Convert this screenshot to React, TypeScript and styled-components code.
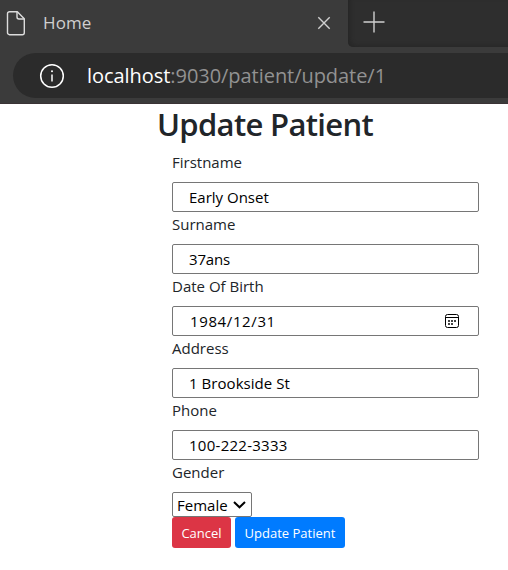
import React from "react";
import styled, { createGlobalStyle } from "styled-components";

const GlobalStyle = createGlobalStyle`
  * { box-sizing: border-box; }
  body {
    margin: 0;
    background: #fff;
    color: #212529;
    font: 400 15px/24px "Open Sans", "Noto Sans", sans-serif;
    overflow: hidden;
  }
`;

const Chrome = styled.header`
  height: 104px;
  background: #3b3b3b;
  border-bottom: 1px solid #3a3335;
`;

const TabStrip = styled.div`
  display: flex;
  height: 47px;
`;

const Tab = styled.div`
  display: flex;
  align-items: center;
  width: 348px;
  padding: 0 17px 1px 6px;
  color: #cfcfcf;
`;

const TabTitle = styled.span`
  flex: 1;
  margin-left: 17px;
  font-size: 17px;
  letter-spacing: 0.1px;
`;

const NewTabArea = styled.div`
  display: flex;
  align-items: center;
  flex: 1;
  padding: 0 0 3px 15px;
  background: #2e2e2e;
  border-bottom-left-radius: 5px;
  box-shadow: inset 3px -2px 4px -1px #262626;
  color: #cfcfcf;
`;

const AddressBar = styled.div`
  display: flex;
  align-items: center;
  height: 45px;
  margin: 6px 0 0 13px;
  padding-left: 26px;
  background: #2b2b2b;
  border-radius: 23px 0 0 23px;
  color: #fff;
`;

const Url = styled.span`
  margin-left: 22px;
  font-size: 20px;
  line-height: 28px;
  letter-spacing: -0.05px;
  color: #929292;
`;

const Host = styled.span`
  color: #fff;
`;

const Page = styled.main`
  padding-left: 172px;
`;

const Title = styled.h2`
  margin: 0 0 8px -15px;
  height: 38px;
  font-size: 31px;
  line-height: 40px;
  font-weight: 600;
  letter-spacing: -0.68px;
  white-space: nowrap;
`;

const Form = styled.form`
  width: 307px;
`;

const Label = styled.label`
  display: block;
  height: 24px;
  margin-bottom: 8px;
`;

const Control = styled.div`
  display: flex;
  align-items: center;
  justify-content: space-between;
  height: 30px;
  padding: 0 19px 0 16px;
  border: 1px solid #767676;
  border-radius: 2px;
  background: #fff;
  color: #000;
`;

const Value = styled.span<{ $tracking?: number; $indent?: number }>`
  letter-spacing: ${(p) => p.$tracking ?? 0}px;
  margin-left: ${(p) => p.$indent ?? 0}px;
`;

const Select = styled.div`
  display: flex;
  align-items: center;
  justify-content: space-between;
  width: 80px;
  height: 25px;
  padding: 0 5px 0 4px;
  border: 1px solid #767676;
  border-radius: 2px;
  color: #000;
`;

const Actions = styled.div`
  display: flex;
  gap: 4px;
`;

const Button = styled.button<{ $danger?: boolean }>`
  width: ${(p) => (p.$danger ? 59 : 110)}px;
  height: 31px;
  padding: 1px 0 0;
  border: 0;
  border-radius: 3px;
  background: ${(p) => (p.$danger ? "#dc3545" : "#007bff")};
  color: #fff;
  font: inherit;
  font-size: 13px;
  line-height: 21px;
  white-space: nowrap;
`;

const PageIcon = () => (
  <svg width="20" height="26" viewBox="0 0 20 26" fill="none" stroke="#dcdcdc" strokeWidth="1.4">
    <path d="M3.5 1.7h7.8l7 7v14a2 2 0 0 1-2 2H3.5a2 2 0 0 1-2-2v-19a2 2 0 0 1 2-2z" />
    <path d="M11 2v5a2 2 0 0 0 2 2h5" />
  </svg>
);

const CloseIcon = () => (
  <svg width="14" height="14" viewBox="0 0 14 14" stroke="currentColor" strokeWidth="1.4">
    <path d="M1.3 1.3l11.4 11.4M12.7 1.3L1.3 12.7" />
  </svg>
);

const PlusIcon = () => (
  <svg width="22" height="22" viewBox="0 0 22 22" stroke="currentColor" strokeWidth="1.4">
    <path d="M.5 11h21M11 .5v21" />
  </svg>
);

const InfoIcon = () => (
  <svg width="26" height="26" viewBox="0 0 26 26" fill="none" stroke="#fff" strokeWidth="1.5">
    <circle cx="13" cy="13" r="11.3" />
    <path d="M13 11.5v7" />
    <circle cx="13" cy="8.3" r="1" fill="#fff" stroke="none" />
  </svg>
);

const CalendarIcon = () => (
  <svg width="14" height="14" viewBox="0 0 14 14">
    <rect x=".5" y=".5" width="13" height="13" rx="2" fill="none" stroke="#000" />
    <path d="M1 3.5h12" stroke="#000" />
    <path d="M3 6h2v2H3zM6 6h2v2H6zM9 6h2v2H9zM3 9h2v2H3zM6 9h2v2H6z" fill="#444" />
  </svg>
);

const Chevron = () => (
  <svg width="13" height="8" viewBox="0 0 13 8" fill="none" stroke="#000" strokeWidth="2">
    <path d="M1 1l5.5 5.3L12 1" />
  </svg>
);

type Field = { label: string; value: string; tracking?: number; date?: boolean };

const fields: Field[] = [
  { label: "Firstname", value: "Early Onset" },
  { label: "Surname", value: "37ans", tracking: -0.15 },
  { label: "Date Of Birth", value: "1984/12/31", tracking: 0.62, date: true },
  { label: "Address", value: "1 Brookside St", tracking: 0.05 },
  { label: "Phone", value: "100-222-3333", tracking: 0.27 },
];

export default function App() {
  return (
    <>
      <GlobalStyle />
      <Chrome>
        <TabStrip>
          <Tab>
            <PageIcon />
            <TabTitle>Home</TabTitle>
            <CloseIcon />
          </Tab>
          <NewTabArea>
            <PlusIcon />
          </NewTabArea>
        </TabStrip>
        <AddressBar>
          <InfoIcon />
          <Url>
            <Host>localhost</Host>:9030/patient/update/1
          </Url>
        </AddressBar>
      </Chrome>
      <Page>
        <Title>Update Patient</Title>
        <Form>
          {fields.map((f) => (
            <div key={f.label}>
              <Label>{f.label}</Label>
              <Control>
                <Value $tracking={f.tracking} $indent={f.date ? 1 : 0}>{f.value}</Value>
                {f.date && <CalendarIcon />}
              </Control>
            </div>
          ))}
          <Label>Gender</Label>
          <Select>
            <Value>Female</Value>
            <Chevron />
          </Select>
          <Actions>
            <Button type="button" $danger>Cancel</Button>
            <Button type="button">Update Patient</Button>
          </Actions>
        </Form>
      </Page>
    </>
  );
}
